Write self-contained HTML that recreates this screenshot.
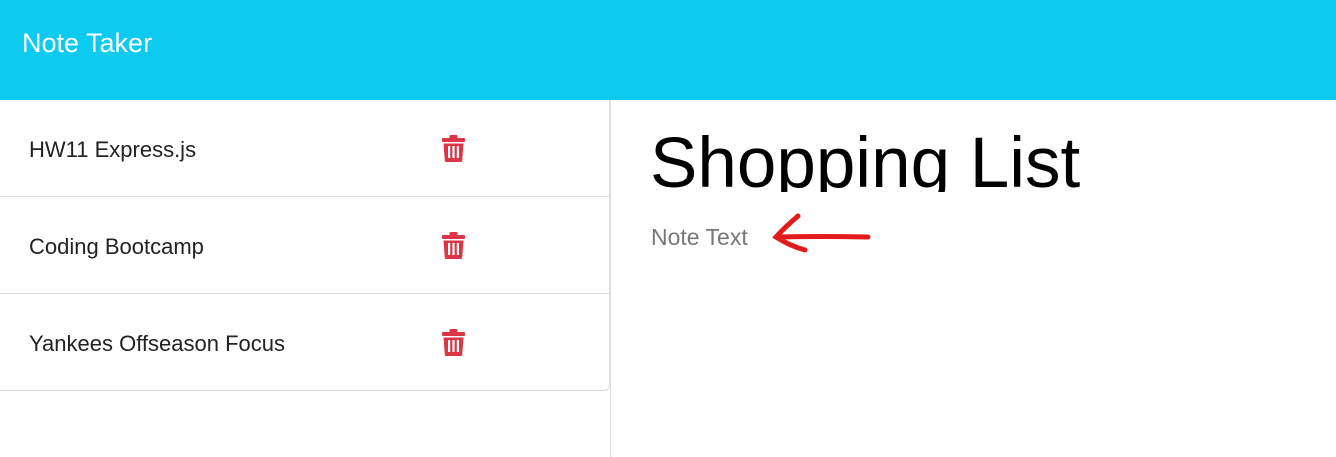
<!DOCTYPE html>
<html><head><style>
body{margin:0;width:1336px;height:457px;overflow:hidden;font-family:"Liberation Sans",sans-serif;background:#fff}
.hdr{height:100px;background:#0dcaf0;color:#fff;font-size:27px;line-height:86px;padding-left:22px}
.left{position:absolute;left:0;top:100px;width:610px;height:357px;border-right:1px solid #ddd}
.list{border:1px solid #ddd;border-left:none;border-top:none;border-radius:0 0 6px 0;width:609px}
.item{height:96px;border-bottom:1px solid #ddd;position:relative;font-size:22px;color:#222;line-height:100px;padding-left:29px}
.item:last-child{border-bottom:none}
.item svg{position:absolute;left:442px;top:35px}
.title{position:absolute;left:650px;top:124px;font-size:71px;color:#000;height:68px;overflow:hidden;line-height:80px}
.nt{position:absolute;left:651px;top:224px;font-size:23px;color:#777}
</style></head><body>
<div class="hdr">Note Taker</div>
<div class="left"><div class="list">
<div class="item">HW11 Express.js<svg width="23" height="27" viewBox="0 0 23 27"><rect x="0" y="3" width="23" height="4" rx="1" fill="#dc3545"/><rect x="7.5" y="0" width="8" height="4" rx="1" fill="#dc3545"/><path d="M1.5 8.5h20l-1.3 17a1.5 1.5 0 0 1-1.5 1.5h-14.4a1.5 1.5 0 0 1-1.5-1.5z" fill="#dc3545"/><rect x="6" y="11" width="2.2" height="12" fill="#fff"/><rect x="10.4" y="11" width="2.2" height="12" fill="#fff"/><rect x="14.8" y="11" width="2.2" height="12" fill="#fff"/></svg></div>
<div class="item">Coding Bootcamp<svg width="23" height="27" viewBox="0 0 23 27"><rect x="0" y="3" width="23" height="4" rx="1" fill="#dc3545"/><rect x="7.5" y="0" width="8" height="4" rx="1" fill="#dc3545"/><path d="M1.5 8.5h20l-1.3 17a1.5 1.5 0 0 1-1.5 1.5h-14.4a1.5 1.5 0 0 1-1.5-1.5z" fill="#dc3545"/><rect x="6" y="11" width="2.2" height="12" fill="#fff"/><rect x="10.4" y="11" width="2.2" height="12" fill="#fff"/><rect x="14.8" y="11" width="2.2" height="12" fill="#fff"/></svg></div>
<div class="item">Yankees Offseason Focus<svg width="23" height="27" viewBox="0 0 23 27"><rect x="0" y="3" width="23" height="4" rx="1" fill="#dc3545"/><rect x="7.5" y="0" width="8" height="4" rx="1" fill="#dc3545"/><path d="M1.5 8.5h20l-1.3 17a1.5 1.5 0 0 1-1.5 1.5h-14.4a1.5 1.5 0 0 1-1.5-1.5z" fill="#dc3545"/><rect x="6" y="11" width="2.2" height="12" fill="#fff"/><rect x="10.4" y="11" width="2.2" height="12" fill="#fff"/><rect x="14.8" y="11" width="2.2" height="12" fill="#fff"/></svg></div>
</div></div>
<div class="title">Shopping List</div>
<div class="nt">Note Text</div>
<svg style="position:absolute;left:770px;top:210px" width="110" height="50"><path d="M28 6 Q14 18 6 27 Q20 36 35 40 M8 27 Q50 26 98 27" stroke="#e31b1b" stroke-width="5" fill="none" stroke-linecap="round"/></svg>
</body></html>
